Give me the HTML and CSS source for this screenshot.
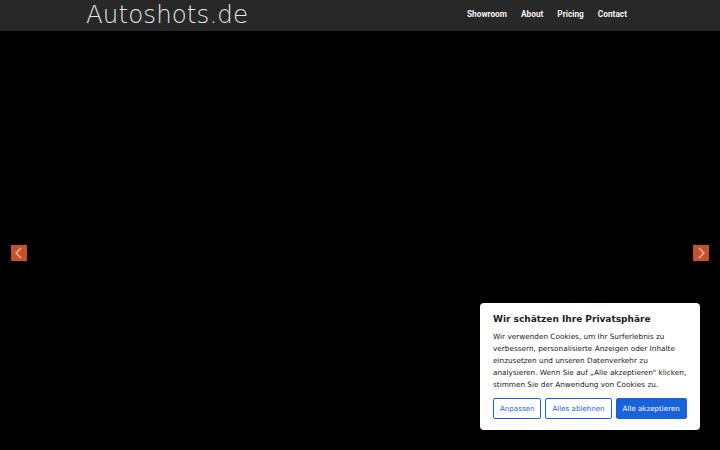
FILE: index.html
```html
<!DOCTYPE html>
<html lang="de">
<head>
  <meta charset="UTF-8">
  <meta name="viewport" content="width=device-width, initial-scale=1.0">
  <title>Autoshots.de</title>
  <link rel="stylesheet" href="styles.css">
</head>
<body>
  <header class="topbar">
    <div class="topbar-inner">
      <a class="logo" href="#">Autoshots.de</a>
      <nav class="menu">
        <a href="#">Showroom</a>
        <a href="#">About</a>
        <a href="#">Pricing</a>
        <a href="#">Contact</a>
      </nav>
    </div>
  </header>

  <main class="slider">
    <button class="slider-arrow prev" aria-label="Zurück">
      <svg viewBox="0 0 16 16" width="16" height="16"><polyline points="10,3 5,8 10,13" fill="none" stroke="#f6c8a8" stroke-width="1.2"/></svg>
    </button>
    <button class="slider-arrow next" aria-label="Weiter">
      <svg viewBox="0 0 16 16" width="16" height="16"><polyline points="6,3 11,8 6,13" fill="none" stroke="#f6c8a8" stroke-width="1.2"/></svg>
    </button>
  </main>

  <!-- Cookie-Hinweis -->
  <div class="cookie-box">
    <p class="cookie-title">Wir schätzen Ihre Privatsphäre</p>
    <p class="cookie-text">Wir verwenden Cookies, um Ihr Surferlebnis zu verbessern, personalisierte Anzeigen oder Inhalte einzusetzen und unseren Datenverkehr zu analysieren. Wenn Sie auf „Alle akzeptieren" klicken, stimmen Sie der Anwendung von Cookies zu.</p>
    <div class="cookie-buttons">
      <button class="btn-outline">Anpassen</button>
      <button class="btn-outline">Alles ablehnen</button>
      <button class="btn-primary">Alle akzeptieren</button>
    </div>
  </div>
</body>
</html>
```

FILE: styles.css
```css
html, body {
  height: 100%;
}

body {
  margin: 0;
  background-color: #000;
  font-family: "DejaVu Sans", sans-serif;
  display: flex;
  flex-direction: column;
  overflow: hidden;
}

.topbar {
  height: 31px;
  background-color: #282828;
  flex-shrink: 0;
}

.topbar-inner {
  width: 548px;
  margin: 0 auto;
  height: 100%;
  display: flex;
  align-items: center;
  justify-content: space-between;
}

.logo {
  display: block;
  align-self: flex-start;
  margin-top: 1px;
  font-family: "DejaVu Sans", sans-serif;
  font-weight: 200;
  font-size: 24.5px;
  line-height: 27px;
  color: #e6e6e6;
  text-decoration: none;
  letter-spacing: 0.1px;
}

.menu {
  display: flex;
  gap: 14px;
  padding-right: 7px;
  margin-top: -4px;
}

.menu a {
  font-family: Roboto, sans-serif;
  font-weight: 700;
  font-size: 8.3px;
  color: #f2f2f2;
  text-decoration: none;
}

.slider {
  flex: 1;
  position: relative;
}

.slider-arrow {
  position: absolute;
  top: 214px;
  width: 16px;
  height: 16px;
  padding: 0;
  border: none;
  background-color: #c4512f;
  display: flex;
  cursor: pointer;
}

.slider-arrow.prev {
  left: 11px;
}

.slider-arrow.next {
  right: 11px;
}

.cookie-box {
  position: fixed;
  right: 20px;
  bottom: 20px;
  width: 194px;
  padding: 11px 13px;
  background-color: #fff;
  border-radius: 4px;
  color: #212121;
}

.cookie-title {
  margin: 0 0 7px;
  font-weight: 700;
  font-size: 9px;
}

.cookie-text {
  margin: 0 0 7px;
  font-size: 7.3px;
  line-height: 12px;
}

.cookie-buttons {
  display: flex;
  gap: 4px;
}

.cookie-buttons button {
  font-family: "DejaVu Sans", sans-serif;
  font-size: 7.1px;
  height: 21px;
  padding: 0 6px;
  border-radius: 2px;
  white-space: nowrap;
  cursor: pointer;
}

.btn-outline {
  background-color: #fff;
  color: #1863dc;
  border: 1.5px solid #1863dc;
}

.btn-primary {
  background-color: #1863dc;
  color: #fff;
  border: 1.5px solid #1863dc;
}
```
